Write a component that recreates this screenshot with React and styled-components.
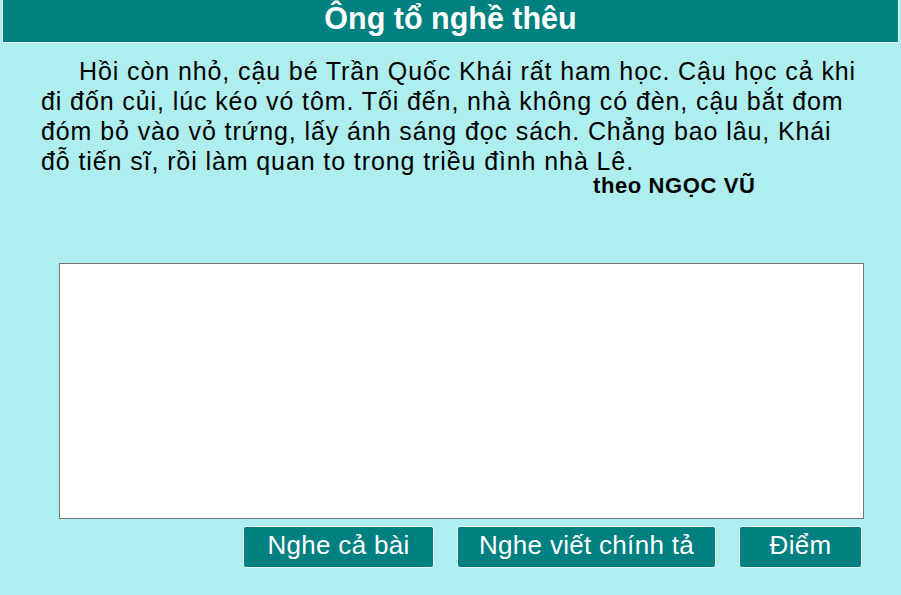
import styled, { createGlobalStyle } from 'styled-components'

const GlobalStyle = createGlobalStyle`
  body {
    margin: 0;
    background: #afeeee;
    font-family: "Liberation Sans", Arial, sans-serif;
  }
`

const StyledPage = styled.div`
  display: flex;
  flex-direction: column;
  min-height: 595px;
`

const StyledTitle = styled.h1`
  margin: 0 2px;
  height: 42px;
  border: 1px solid #e8ffff;
  border-top: none;
  background: #008080;
  color: #fff;
  font-size: 30.5px;
  font-weight: bold;
  line-height: 36px;
  text-align: center;
`

const StyledStory = styled.p`
  margin: 13px 0 0 41px;
  width: 822px;
  font-size: 25px;
  letter-spacing: 0.9px;
  line-height: 30px;
  text-indent: 38px;
  color: #000;
`

const StyledAuthor = styled.div`
  margin: 0 0 0 593px;
  font-size: 22px;
  font-weight: bold;
  letter-spacing: 0.6px;
  line-height: 20px;
  color: #000;
`

const StyledAnswer = styled.textarea`
  display: block;
  box-sizing: border-box;
  margin: 67px 0 0 59px;
  width: 805px;
  height: 256px;
  border: 1px solid #767676;
  background: #fff;
  resize: none;
  font-family: "Liberation Sans", Arial, sans-serif;
  font-size: 20px;
`

const StyledActions = styled.div`
  display: flex;
  justify-content: flex-end;
  gap: 23px;
  margin: 7px 0 0;
  width: 862px;
`

const StyledButton = styled.button`
  box-sizing: border-box;
  width: ${props => props.width}px;
  height: 42px;
  padding: 0 0 4px;
  border: 1px solid #e6f5f5;
  border-radius: 3px;
  background: #008080;
  color: #fff;
  font-family: "Liberation Sans", Arial, sans-serif;
  font-size: 26px;
  letter-spacing: 0.3px;
  cursor: pointer;
`

const buttons = [
  { label: 'Nghe cả bài', width: 191 },
  { label: 'Nghe viết chính tả', width: 259 },
  { label: 'Điểm', width: 123 }
]

const App = () => (
  <StyledPage>
    <GlobalStyle />
    <StyledTitle>Ông tổ nghề thêu</StyledTitle>
    <StyledStory>
      Hồi còn nhỏ, cậu bé Trần Quốc Khái rất ham học. Cậu học cả khi đi đốn củi, lúc kéo vó tôm. Tối đến, nhà không có đèn, cậu bắt đom đóm bỏ vào vỏ trứng, lấy ánh sáng đọc sách. Chẳng bao lâu, Khái đỗ tiến sĩ, rồi làm quan to trong triều đình nhà Lê.
    </StyledStory>
    <StyledAuthor>theo NGỌC VŨ</StyledAuthor>
    <StyledAnswer />
    <StyledActions>
      {buttons.map(button => (
        <StyledButton key={button.label} width={button.width}>{button.label}</StyledButton>
      ))}
    </StyledActions>
  </StyledPage>
)

export default App
